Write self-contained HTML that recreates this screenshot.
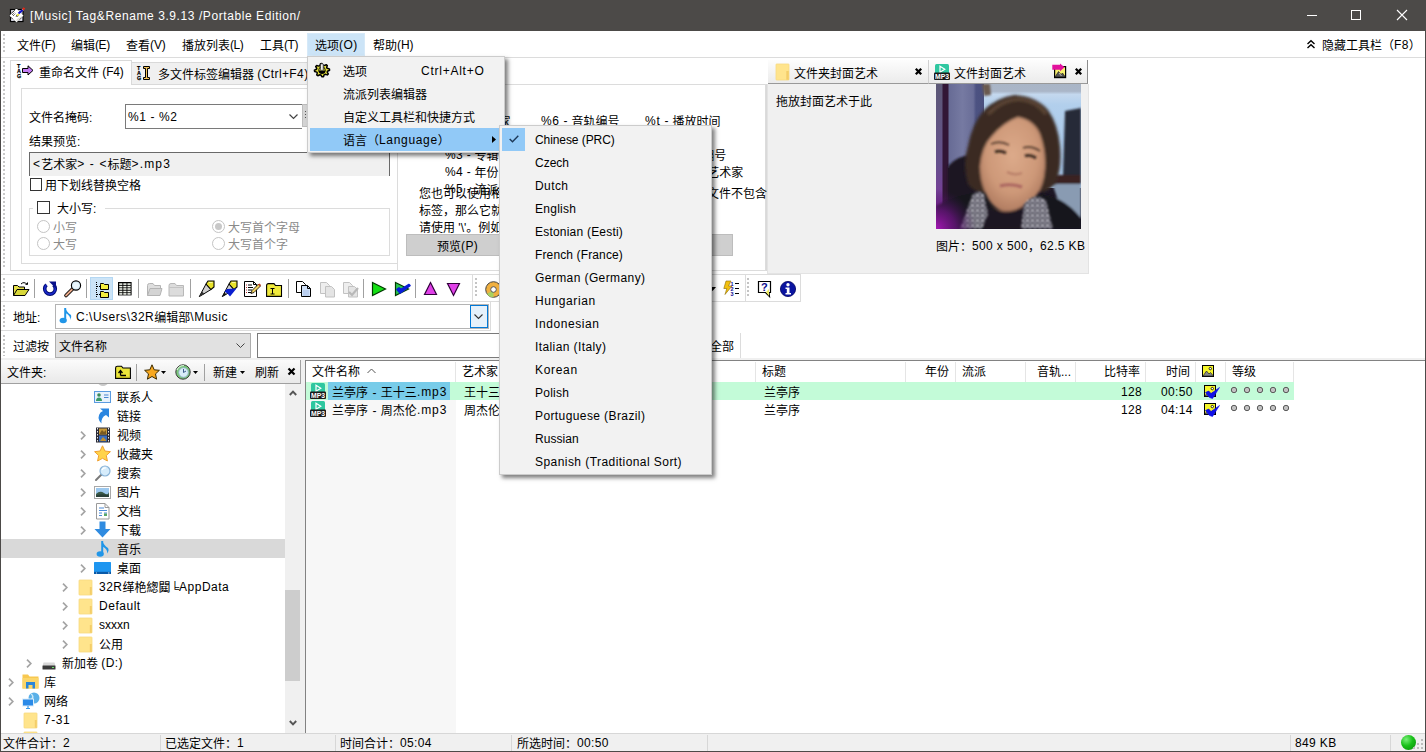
<!DOCTYPE html>
<html lang="zh-CN">
<head>
<meta charset="utf-8">
<title>[Music] Tag&amp;Rename 3.9.13 /Portable Edition/</title>
<style>
*{box-sizing:border-box;margin:0;padding:0}
html,body{width:1426px;height:752px;overflow:hidden;background:#fff}
body{position:relative;font:12px/16px "Liberation Sans","Noto Sans CJK SC",sans-serif;color:#000}
.a{position:absolute}
.t{position:absolute;white-space:nowrap;height:16px;line-height:16px;margin-top:2px}
.g{color:#8a8a8a}
.l{letter-spacing:.37px;position:relative;top:-1px}
.vs{position:absolute;width:1px;background:#a0a0a0}
svg{position:absolute;overflow:visible}
.mi{position:absolute;left:0;width:100%;height:23px}
.tr{position:absolute;left:0;width:284px;height:19px}
.ex{position:absolute;top:6px;width:6px;height:9px}
.hd{position:absolute;top:362px;height:20px;border-right:1px solid #e5e5e5}
</style>
</head>
<body>

<!-- ===== TITLE BAR ===== -->
<div class="a" id="titlebar" style="left:0;top:0;width:1426px;height:31px;background:#4c4a48"></div>
<div class="t" style="left:30px;top:7px;color:#fff"><span class="l" style="letter-spacing:0.58px">[Music] Tag&amp;Rename 3.9.13 /Portable Edition/</span></div>
<svg style="left:8px;top:6px" width="18" height="18" viewBox="0 0 18 18">
 <rect x="2.500" y="3.500" width="12.500" height="12" fill="#e8e8f4" stroke="#000" stroke-width="1.200"/>
 <path d="M8.500 2.200L15.800 9.500L8.500 16.800L1.200 9.500Z" fill="#fff" stroke="#000" stroke-width="1" stroke-dasharray="1 1"/>
 <path d="M4 7L7 4M4 9L7 6M5 10L8 7" stroke="#000" stroke-width=".9" stroke-dasharray="1 1"/>
 <path d="M8 16L15 9.500L9 13Z" fill="#d8d8d0"/>
 <path d="M7.500 10.500L9 8.500L10.500 9L10 10.500Z" fill="#000"/>
 <path d="M8.300 9.200L10.200 7.200L11.600 8.600L9.700 10.200Z" fill="#f0ec40"/>
 <path d="M9.800 6.800L14 3.200L15.300 4.800L11.200 8.200Z" fill="#1010c8"/>
 <path d="M14 3L15.500 1.200L17.300 2.600L15.600 4.600Z" fill="#e02818"/>
 <path d="M14.300 3.400L15.300 4.400" stroke="#fff" stroke-width=".8"/>
</svg>
<!-- window buttons -->
<div class="a" style="left:1307px;top:15px;width:10px;height:1px;background:#fff"></div>
<div class="a" style="left:1351px;top:10px;width:10px;height:10px;border:1px solid #fff"></div>
<svg style="left:1397px;top:10px" width="10" height="10" viewBox="0 0 10 10"><path d="M0 0L10 10M10 0L0 10" stroke="#fff" stroke-width="1.1" fill="none"/></svg>

<!-- ===== MENU BAR ===== -->
<div class="a" id="menubar" style="left:1px;top:31px;width:1425px;height:26px;background:#fff"></div>
<div class="a" style="left:307px;top:33px;width:58px;height:23px;background:#cce4f7;border:1px solid #d6e9f8"></div>
<div class="t" style="left:17px;top:36px">文件<span class="l" style="letter-spacing:-0.32px">(F)</span></div>
<div class="t" style="left:71px;top:36px">编辑<span class="l" style="letter-spacing:-0.41px">(E)</span></div>
<div class="t" style="left:126px;top:36px">查看<span class="l" style="letter-spacing:-0.11px">(V)</span></div>
<div class="t" style="left:182px;top:36px">播放列表<span class="l" style="letter-spacing:-0.44px">(L)</span></div>
<div class="t" style="left:260px;top:36px">工具<span class="l" style="letter-spacing:-0.47px">(T)</span></div>
<div class="t" style="left:315px;top:36px">选项<span class="l" style="letter-spacing:0.43px">(O)</span></div>
<div class="t" style="left:373px;top:36px">帮助<span class="l" style="letter-spacing:-0.04px">(H)</span></div>
<svg style="left:1307px;top:40px" width="8" height="9" viewBox="0 0 8 9"><path d="M0.5 4L4 0.8L7.5 4M0.5 8L4 4.8L7.5 8" stroke="#000" stroke-width="1.4" fill="none"/></svg>
<div class="t" style="left:1322px;top:36px">隐藏工具栏（<span class="l">F8</span>）</div>
<div class="a" style="left:1px;top:57px;width:1425px;height:1px;background:#dcdcdc"></div>
<div class="a" style="left:3px;top:34px;width:2px;height:19px;background:repeating-linear-gradient(to bottom,#c8c8c8 0 2px,transparent 2px 4px)"></div>

<!--SECTION:TABS-->
<!-- ===== TAB CONTROL (rename) ===== -->
<!-- left grip dots -->
<div class="a" style="left:3px;top:61px;width:2px;height:208px;background:repeating-linear-gradient(to bottom,#c8c8c8 0 2px,transparent 2px 4px)"></div>
<!-- inactive tab 2 -->
<div class="a" style="left:131px;top:62px;width:240px;height:22px;background:#f0f0f0;border:1px solid #d9d9d9;border-bottom:none"></div>
<!-- page -->
<div class="a" id="page" style="left:10px;top:84px;width:757px;height:187px;background:#fff;border:1px solid #d9d9d9"></div>
<!-- active tab 1 -->
<div class="a" style="left:10px;top:60px;width:122px;height:25px;background:#fff;border:1px solid #d9d9d9;border-bottom:none"></div>
<!-- tab icons -->
<svg style="left:17px;top:63px" width="18" height="16" viewBox="0 0 18 16">
 <text x="0" y="5" font-size="5.4" font-weight="bold" stroke="#000" stroke-width=".25" font-family="Liberation Sans,sans-serif">T</text>
 <text x="0" y="10" font-size="5.4" font-weight="bold" stroke="#000" stroke-width=".25" font-family="Liberation Sans,sans-serif">A</text>
 <text x="0" y="15" font-size="5.4" font-weight="bold" stroke="#000" stroke-width=".25" font-family="Liberation Sans,sans-serif">G</text>
 <path d="M5.500 5.500H11V2.800L16 7.400L11 12V9.500H5.500Z" fill="#c27cf2" stroke="#000" stroke-width="1"/>
</svg>
<div class="t" style="left:39px;top:63px">重命名文件 <span class="l" style="letter-spacing:-0.18px">(F4)</span></div>
<svg style="left:137px;top:65px" width="16" height="16" viewBox="0 0 16 16">
 <text x="0" y="5" font-size="5.4" font-weight="bold" stroke="#000" stroke-width=".25" font-family="Liberation Sans,sans-serif">T</text>
 <text x="0" y="10" font-size="5.4" font-weight="bold" stroke="#000" stroke-width=".25" font-family="Liberation Sans,sans-serif">A</text>
 <text x="0" y="15" font-size="5.4" font-weight="bold" stroke="#000" stroke-width=".25" font-family="Liberation Sans,sans-serif">G</text>
 <path d="M6.5 1.5H12.5V3.5H10.5V12.5H12.5V14.5H6.5V12.5H8.5V3.5H6.5Z" fill="#f2c45a" stroke="#000" stroke-width="1"/>
</svg>
<div class="t" style="left:158px;top:65px">多文件标签编辑器 <span class="l" style="letter-spacing:0.39px">(Ctrl+F4)</span></div>

<!-- left group box -->
<div class="a" style="left:21px;top:88px;width:377px;height:176px;border:1px solid #dcdcdc"></div>
<div class="t" style="left:29px;top:108px">文件名掩码:</div>
<div class="a" style="left:125px;top:104px;width:177px;height:25px;border:1px solid #7a7a7a;border-right:none;background:#fff"></div>
<div class="t" style="left:128px;top:108px"><span class="l" style="letter-spacing:0.61px">%1 - %2</span></div>
<svg style="left:289px;top:114px" width="9" height="6" viewBox="0 0 9 6"><path d="M0.500 0.500L4.500 4.500L8.500 0.500" stroke="#444" stroke-width="1.200" fill="none"/></svg>
<div class="a" style="left:302px;top:104px;width:10px;height:23px;background:#d4d4d4;border:1px solid #bdbdbd"></div>
<div class="a" style="left:305px;top:111px;width:1px;height:9px;background:repeating-linear-gradient(to bottom,#555 0 1px,transparent 1px 3px)"></div>
<div class="t" style="left:29px;top:132px">结果预览:</div>
<div class="a" style="left:29px;top:152px;width:361px;height:24px;background:#f0f0f0;border-top:1px solid #696969;border-left:1px solid #696969;border-right:1px solid #696969"></div>
<div class="t" style="left:33px;top:155px"><span class="l" style="letter-spacing:1.14px">&lt;</span>艺术家<span class="l" style="letter-spacing:1.14px">&gt; - &lt;</span>标题<span class="l" style="letter-spacing:1.14px">&gt;.mp3</span></div>
<div class="a" style="left:30px;top:178px;width:12px;height:13px;border:1px solid #333;background:#fff"></div>
<div class="t" style="left:45px;top:176px">用下划线替换空格</div>
<!-- case group -->
<div class="a" style="left:29px;top:208px;width:361px;height:48px;border:1px solid #dcdcdc"></div>
<div class="a" style="left:33px;top:200px;width:72px;height:16px;background:#fff"></div>
<div class="a" style="left:37px;top:201px;width:13px;height:13px;border:1px solid #333;background:#fff"></div>
<div class="t" style="left:57px;top:199px">大小写:</div>
<div class="a" style="left:37px;top:220px;width:13px;height:13px;border:1px solid #c4c4c4;border-radius:50%"></div>
<div class="t g" style="left:53px;top:218px">小写</div>
<div class="a" style="left:37px;top:237px;width:13px;height:13px;border:1px solid #c4c4c4;border-radius:50%"></div>
<div class="t g" style="left:53px;top:235px">大写</div>
<div class="a" style="left:212px;top:220px;width:13px;height:13px;border:1px solid #c4c4c4;border-radius:50%"></div>
<div class="a" style="left:215px;top:223px;width:7px;height:7px;background:#c8c8c8;border-radius:50%"></div>
<div class="t g" style="left:228px;top:218px">大写首个字母</div>
<div class="a" style="left:212px;top:237px;width:13px;height:13px;border:1px solid #c4c4c4;border-radius:50%"></div>
<div class="t g" style="left:228px;top:235px">大写首个字</div>

<!-- hints panel -->
<div class="a" style="left:397px;top:84px;width:369px;height:187px;border:1px solid #dcdcdc;background:#fff"></div>
<div class="t" style="left:445px;top:112px"><span class="l">%1 -</span> 艺术家</div>
<div class="t" style="left:541px;top:112px"><span class="l" style="letter-spacing:0.64px">%6 -</span> 音轨编号</div>
<div class="t" style="left:645px;top:112px"><span class="l" style="letter-spacing:0.73px">%t -</span> 播放时间</div>
<div class="t" style="left:445px;top:129px"><span class="l">%2 -</span> 标题</div>
<div class="t" style="left:541px;top:129px"><span class="l">%7 -</span> 注释</div>
<div class="t" style="left:645px;top:129px"><span class="l">%d -</span> 光盘号</div>
<div class="t" style="left:445px;top:146px"><span class="l">%3 -</span> 专辑</div>
<div class="t" style="left:541px;top:146px"><span class="l">%8 -</span> 作曲</div>
<div class="t" style="left:637.5px;top:146px"><span class="l">%k -</span> 光盘总编号</div>
<div class="t" style="left:445px;top:163px"><span class="l">%4 -</span> 年份</div>
<div class="t" style="left:541px;top:163px"><span class="l">%9 -</span> 指挥</div>
<div class="t" style="left:645px;top:163px"><span class="l" style="letter-spacing:0.72px">%aa -</span> 专辑艺术家</div>
<div class="t" style="left:445px;top:180px"><span class="l">%5 -</span> 流派</div>
<div class="t" style="left:419px;top:184px">您也可以使用格式化字符串来创建子目录，如果某一个文件不包含</div>
<div class="t" style="left:419px;top:201px">标签，那么它就不会被重命名。要分隔目录，</div>
<div class="t" style="left:419px;top:218px">请使用 '\'。例如：<span class="l">%1\%3\%6 - %2</span></div>
<div class="a" style="left:406px;top:234px;width:160px;height:22px;background:#cfcfcf;border:1px solid #bdbdbd"></div>
<div class="a" style="left:573px;top:234px;width:160px;height:22px;background:#cfcfcf;border:1px solid #bdbdbd"></div>
<div class="t" style="left:437px;top:237px">预览<span class="l">(P)</span></div>
<!--/SECTION:TABS-->

<!--SECTION:COVER-->
<!-- ===== COVER ART PANELS ===== -->
<div class="a" style="left:767px;top:84px;width:322px;height:190px;background:#f0f0f0;border:1px solid #e3e3e3;border-top:none"></div>
<div class="a" style="left:768px;top:60px;width:161px;height:24px;background:linear-gradient(#fdfdfd,#ebebeb);border-right:1px solid #d0d0d0;border-bottom:1px solid #999"></div>
<div class="a" style="left:929px;top:60px;width:159px;height:24px;background:linear-gradient(#fdfdfd,#ebebeb);border-right:1px solid #8c8c8c;border-bottom:1px solid #999"></div>
<!-- folder icon -->
<svg style="left:776px;top:64px" width="13" height="16" viewBox="0 0 13 16"><rect x="0" y="0" width="13" height="16" rx=".6" fill="#ffe48c"/><rect x="10.300" y="7" width="2.700" height="9" fill="#f4cd68"/><rect x="0" y="0" width="13" height="16" rx=".6" fill="none" stroke="#f8d980" stroke-width=".8"/></svg>
<div class="t" style="left:794px;top:64px">文件夹封面艺术</div>
<svg style="left:915px;top:68px" width="7" height="7" viewBox="0 0 7 7"><path d="M0.800 0.800L6.200 6.200M6.200 0.800L0.800 6.200" stroke="#000" stroke-width="2.300" fill="none"/></svg>
<!-- mp3 icon -->
<svg style="left:934px;top:64px" width="16" height="16" viewBox="0 0 16 16"><rect x="1" y="0" width="14" height="11" rx="1.5" fill="#2fc7a0"/><path d="M6 2.2L10.8 5.2L6 8.2Z" fill="none" stroke="#fff" stroke-width="1.2"/><rect x="0" y="8.500" width="16" height="7.500" rx="1" fill="#1a1a1a"/><text x="8" y="15" font-size="7" font-weight="bold" fill="#fff" text-anchor="middle" textLength="14" lengthAdjust="spacingAndGlyphs" font-family="Liberation Sans,sans-serif">MP3</text></svg>
<div class="t" style="left:954px;top:64px">文件封面艺术</div>
<!-- small picture icon -->
<svg style="left:1052px;top:63px" width="15" height="16" viewBox="0 0 15 16"><rect x="2.600" y="3.600" width="11" height="11" fill="#f8f070" stroke="#000" stroke-width="1.200"/><path d="M3 14L6.500 8.500L9 11.500L10.500 10L13 13.500V14Z" fill="#555" stroke="#111" stroke-width=".6"/><path d="M7 10L9.500 13" stroke="#d8d8d8" stroke-width=".8"/><path d="M0.300 1.800H8V0.400L12.600 4.300L8 8.200V6.800H0.300Z" fill="#e2109c"/></svg>
<svg style="left:1075px;top:68px" width="7" height="7" viewBox="0 0 7 7"><path d="M0.800 0.800L6.200 6.200M6.200 0.800L0.800 6.200" stroke="#000" stroke-width="2.300" fill="none"/></svg>
<div class="t" style="left:776px;top:92px">拖放封面艺术于此</div>
<!-- album art thumbnail : abstract colour regions -->
<svg style="left:936px;top:84px" width="145" height="145" viewBox="0 0 145 145">
 <defs>
  <clipPath id="cv"><rect x="0" y="0" width="145" height="145"/></clipPath>
  <filter id="b1" x="-20%" y="-20%" width="140%" height="140%"><feGaussianBlur stdDeviation="0.9"/></filter>
  <filter id="b2" x="-20%" y="-20%" width="140%" height="140%"><feGaussianBlur stdDeviation="1.5"/></filter>
  <linearGradient id="wall" x1="0" y1="0" x2="0" y2="1"><stop offset="0" stop-color="#a9b5c6"/><stop offset=".07" stop-color="#aab6c8"/><stop offset=".1" stop-color="#c4d8ee"/><stop offset=".2" stop-color="#b2cfec"/><stop offset="1" stop-color="#a6c6e8"/></linearGradient>
  <linearGradient id="cur" x1="0" y1="0" x2="1" y2="0"><stop offset="0" stop-color="#666a94"/><stop offset=".4" stop-color="#767aa2"/><stop offset=".7" stop-color="#6a6e98"/><stop offset=".78" stop-color="#4c5282"/><stop offset="1" stop-color="#4a507e"/></linearGradient>
  <linearGradient id="strip" x1="0" y1="0" x2="0" y2="1"><stop offset="0" stop-color="#5c5876"/><stop offset=".55" stop-color="#65508c"/><stop offset=".8" stop-color="#7a3a9a"/><stop offset="1" stop-color="#9a1aa8"/></linearGradient>
  <radialGradient id="glow" cx="0" cy="1" r="1"><stop offset="0" stop-color="#a516b4"/><stop offset=".5" stop-color="#6a1480" stop-opacity=".75"/><stop offset="1" stop-color="#3a1450" stop-opacity="0"/></radialGradient>
  <radialGradient id="skin" cx=".5" cy=".4" r=".65"><stop offset="0" stop-color="#dcaa8a"/><stop offset=".6" stop-color="#cd9878"/><stop offset="1" stop-color="#a8745a"/></radialGradient>
  <pattern id="pais" width="5" height="5" patternUnits="userSpaceOnUse"><rect width="5" height="5" fill="#4a4854"/><circle cx="1.500" cy="1.500" r="1.300" fill="#d8d6e0"/><circle cx="4" cy="3.800" r="1" fill="#b4b2c0"/></pattern>
 </defs>
 <g clip-path="url(#cv)">
  <rect width="145" height="145" fill="#1c1624"/>
  <rect x="46" y="0" width="99" height="104" fill="url(#wall)"/>
  <rect x="12" y="0" width="36" height="84" fill="url(#cur)"/>
  <rect x="0" y="0" width="7" height="145" fill="url(#strip)"/>
  <rect x="6.500" y="0" width="6" height="145" fill="#321636"/>
  <g filter="url(#b1)">
   <path d="M46 0H54L55 11L48 12Z" fill="#6a5a50"/>
   <path d="M129 27L145 24V93L127 91Z" fill="#282c38"/>
   <path d="M116 99H145V138L124 122Z" fill="#899bb2"/>
   <path d="M110 91H145V100H112Z" fill="#3a2420"/>
   <path d="M12 82Q28 66 46 74L52 145H12Z" fill="#1b1622"/>
   <path d="M0 145V122Q40 100 76 114Q118 100 145 134V145Z" fill="#19151d"/>
  </g>
  <g filter="url(#b2)">
   <path d="M32 100Q26 80 32 62Q36 40 48 26Q60 14 78 11Q100 12 112 26Q122 40 124 62Q126 84 120 98Q114 108 104 108L60 108Q40 112 32 100Z" fill="#3a2a23"/>
   <path d="M52 30Q66 16 82 15Q100 16 110 30" stroke="#5c4434" stroke-width="3.500" fill="none"/>
   <path d="M44 82Q46 62 56 52Q68 38 82 33Q98 36 104 50Q110 66 109 84Q108 102 100 112Q88 128 72 129Q56 126 49 108Q44 96 44 82Z" fill="url(#skin)"/>
   <path d="M46 145L50 122Q72 134 90 120L88 145Z" fill="#1a1320"/>
  </g>
  <g filter="url(#b1)">
   <path d="M24 145L36 112Q42 104 48 110L52 130L46 145Z" fill="url(#pais)"/>
   <path d="M85 145L88 120Q98 108 110 116L117 145Z" fill="url(#pais)"/>
  </g>
  <g filter="url(#b1)" opacity=".9">
   <path d="M59 68Q64 66 70 69" stroke="#2a1c16" stroke-width="2.800" fill="none"/>
   <path d="M89 72Q94 70 100 74" stroke="#2a1c16" stroke-width="2.800" fill="none"/>
   <path d="M55 60Q64 56 73 61" stroke="#5a3f30" stroke-width="1.800" fill="none"/>
   <path d="M87 64Q95 61 104 67" stroke="#5a3f30" stroke-width="1.800" fill="none"/>
   <path d="M64 102Q75 99 86 103" stroke="#a8625e" stroke-width="3" fill="none"/>
   <path d="M71 88Q78 92 86 89" stroke="#b57c66" stroke-width="2.200" fill="none"/>
  </g>
  <rect x="0" y="105" width="40" height="40" fill="url(#glow)"/>
 </g>
</svg>
<div class="t" style="left:936px;top:237px">图片：<span class="l">500 x 500</span>，<span class="l">62.5 KB</span></div>
<!--/SECTION:COVER-->

<!--SECTION:TOOLBAR-->
<!-- ===== TOOLBARS ===== -->
<div class="a" style="left:1px;top:274px;width:800px;height:1px;background:#dcdcdc"></div>
<div class="a" style="left:1px;top:301px;width:800px;height:1px;background:#dcdcdc"></div>
<div class="a" style="left:472px;top:275px;width:1px;height:26px;background:#dcdcdc"></div>
<div class="a" style="left:745px;top:275px;width:1px;height:26px;background:#dcdcdc"></div>
<div class="a" style="left:800px;top:275px;width:1px;height:26px;background:#dcdcdc"></div>
<div class="a" style="left:3px;top:278px;width:2px;height:19px;background:repeating-linear-gradient(to bottom,#c4c4c4 0 2px,transparent 2px 4px)"></div>
<div class="a" style="left:475px;top:278px;width:2px;height:19px;background:repeating-linear-gradient(to bottom,#c4c4c4 0 2px,transparent 2px 4px)"></div>
<div class="a" style="left:747px;top:278px;width:2px;height:19px;background:repeating-linear-gradient(to bottom,#c4c4c4 0 2px,transparent 2px 4px)"></div>
<div class="vs" style="left:34px;top:279px;height:19px"></div>
<div class="vs" style="left:86px;top:279px;height:19px"></div>
<div class="vs" style="left:138px;top:279px;height:19px"></div>
<div class="vs" style="left:190px;top:279px;height:19px"></div>
<div class="vs" style="left:288px;top:279px;height:19px"></div>
<div class="vs" style="left:363px;top:279px;height:19px"></div>
<div class="vs" style="left:415px;top:279px;height:19px"></div>
<!-- pressed tree-view button -->
<div class="a" style="left:90px;top:277px;width:23px;height:23px;background:#cce4f7;border:1px solid #b4d7f3"></div>
<!-- 1 open folder -->
<svg style="left:12px;top:281px" width="18" height="16" viewBox="0 0 18 16"><path d="M1.5 14.5V4.5H5.5L7 6H12.5V8.5" fill="#e6e04a" stroke="#000" stroke-width="1"/><path d="M1.5 14.5L5 8.5H17L13 14.5Z" fill="#d8d83a" stroke="#000" stroke-width="1"/><path d="M9 3Q12 0 15 3.5" fill="none" stroke="#000" stroke-width="1"/><path d="M13 3.8H16V1Z" fill="#000"/></svg>
<!-- 2 refresh -->
<svg style="left:42px;top:281px" width="16" height="16" viewBox="0 0 16 16"><path d="M11.5 3.8A5.3 5.3 0 1 1 4.5 3.8" fill="none" stroke="#000a70" stroke-width="3.6"/><path d="M11.5 3.8A5.3 5.3 0 1 1 4.5 3.8" fill="none" stroke="#1a2acc" stroke-width="1.6"/><path d="M7 0.5H14V7.5Z" fill="#0a128a"/></svg>
<!-- 3 magnifier -->
<svg style="left:64px;top:280px" width="18" height="17" viewBox="0 0 18 17"><path d="M2 15.5L9 8.5" stroke="#000" stroke-width="3.6" stroke-linecap="round"/><path d="M2 15.5L8.5 9" stroke="#e8a888" stroke-width="1.8" stroke-linecap="round"/><circle cx="12" cy="5.5" r="4.6" fill="#d6ecf6" stroke="#000" stroke-width="1.1"/><circle cx="12" cy="5.5" r="3" fill="#eaf6fb"/></svg>
<!-- 4 tree view -->
<svg style="left:95px;top:282px" width="15" height="17" viewBox="0 0 15 17"><path d="M1.5 0V16" stroke="#000" stroke-width="1" stroke-dasharray="1 1"/><path d="M2 4.5H6M2 12.5H6" stroke="#000" stroke-width="1" stroke-dasharray="1 1"/><path d="M5.500 2.5V7.500H13.500V2.500H9.500L8.500 1.500H5.500Z" fill="#f2ee40" stroke="#000" stroke-width="1"/><path d="M5.500 10.500V15.500H13.500V10.500H9.500L8.500 9.500H5.500Z" fill="#f2ee40" stroke="#000" stroke-width="1"/></svg>
<!-- 5 table -->
<svg style="left:118px;top:282px" width="14" height="14" viewBox="0 0 14 14"><rect x="0" y="0" width="13.600" height="13.400" fill="#000"/><g fill="#f0f4ec"><rect x="1.2" y="1.3" width="3.2" height="1.6"/><rect x="5.3" y="1.3" width="3.2" height="1.6"/><rect x="9.4" y="1.3" width="3.2" height="1.6"/><rect x="1.2" y="3.8" width="3.2" height="1.6"/><rect x="5.3" y="3.8" width="3.2" height="1.6"/><rect x="9.4" y="3.8" width="3.2" height="1.6"/><rect x="1.2" y="6.2" width="3.2" height="1.6"/><rect x="5.3" y="6.2" width="3.2" height="1.6"/><rect x="9.4" y="6.2" width="3.2" height="1.6"/><rect x="1.2" y="8.7" width="3.2" height="1.6"/><rect x="5.3" y="8.7" width="3.2" height="1.6"/><rect x="9.4" y="8.7" width="3.2" height="1.6"/><rect x="1.2" y="11.1" width="3.2" height="1.6"/><rect x="5.3" y="11.1" width="3.2" height="1.6"/><rect x="9.4" y="11.1" width="3.2" height="1.6"/></g></svg>
<!-- 6,7 grey folders -->
<svg style="left:146px;top:283px" width="17" height="14" viewBox="0 0 17 14"><path d="M1.500 12.500V2.500Q1.500 0.500 3.500 0.500H7L8.500 2.500H14.500V5.500" fill="#dedede" stroke="#b4b4b4"/><path d="M1.500 12.500L4 5.500H16L14 12.500Z" fill="#d4d4d4" stroke="#b4b4b4"/></svg>
<svg style="left:168px;top:283px" width="17" height="14" viewBox="0 0 17 14"><path d="M1 13V2.500Q1 0.500 3 0.500H7L8.500 2.500H15.500V13Z" fill="#dcdcdc" stroke="#b8b8b8"/><path d="M1 4.500H15.500" stroke="#c4c4c4"/></svg>
<!-- 8 marker -->
<svg style="left:198px;top:280px" width="17" height="18" viewBox="0 0 17 18"><path d="M1.300 16.600L8 4L13 9.500Z" fill="#d0d0d0" stroke="#000" stroke-width="1"/><path d="M8 4L10 1H16V7L13 9.500Z" fill="#e8e22a" stroke="#000" stroke-width="1.100"/><path d="M1.300 16.600L4 11.500L6.500 14Z" fill="#333"/><path d="M11 2.500L14.500 2.500" stroke="#f8f6a0" stroke-width="1"/></svg>
<!-- 9 marker blue -->
<svg style="left:221px;top:280px" width="17" height="18" viewBox="0 0 17 18"><path d="M1.300 16.600L8 4L13 9.500Z" fill="#d0d0d0" stroke="#000" stroke-width="1"/><path d="M8 4L10 1H16V7L13 9.500Z" fill="#e8e22a" stroke="#000" stroke-width="1.100"/><path d="M3.500 11.500L6 9L15.500 8.500L9 16.500L6.500 13.500Z" fill="#0a1ed0"/><path d="M1.300 16.600L3.500 12.500L5.500 14.500Z" fill="#111"/><path d="M11 2.500L14.500 2.500" stroke="#f8f6a0" stroke-width="1"/></svg>
<!-- 10 doc with pencil -->
<svg style="left:244px;top:281px" width="17" height="16" viewBox="0 0 17 16"><path d="M0.500 0.500H9.500L12.500 3.500V15.500H0.500Z" fill="#fff" stroke="#000" stroke-width="1"/><path d="M9.500 0.500V3.500H12.500" fill="none" stroke="#000" stroke-width="1"/><path d="M4 4H8M4 6.500H9M4 9H8M4 11.500H7" stroke="#000" stroke-width="1"/><path d="M2 4H3M2 6.500H3M2 9H3M2 11.500H3" stroke="#c03030" stroke-width="1"/><path d="M7 12.500L8 9.500L14.500 3L16.500 5L10 11.500Z" fill="#f0d060" stroke="#000" stroke-width=".8"/><path d="M14 3.500L15.500 2.500L17 4L16 5.500Z" fill="#c04020"/></svg>
<!-- 11 yellow folder I -->
<svg style="left:266px;top:283px" width="17" height="14" viewBox="0 0 17 14"><path d="M0.600 13.400V2.500Q0.600 0.600 2.500 0.600H8L9.500 2.500H15.500V13.400Z" fill="#f0ea3c" stroke="#000" stroke-width="1.100"/><path d="M4.500 5.500H8.500M4.500 11H8.500M6.500 5.500V11" stroke="#000" stroke-width="1"/><path d="M2 12.400H14.500" stroke="#b8b020" stroke-width="1"/></svg>
<!-- 12 copy -->
<svg style="left:295px;top:280px" width="17" height="17" viewBox="0 0 17 17"><path d="M1.500 1.500H7.500L10.500 4.500V12.500H1.500Z" fill="#fff" stroke="#000" stroke-width="1"/><path d="M6.500 5.500H12.500L15.500 8.500V16.500H6.500Z" fill="#cfe0f8" stroke="#000" stroke-width="1"/><path d="M12.500 5.500V8.500H15.500" fill="none" stroke="#000" stroke-width="1"/><path d="M8 11H14M8 13H14M8 15H14" stroke="#9ab4e0" stroke-width=".8"/></svg>
<!-- 13,14 grey copy -->
<svg style="left:319px;top:281px" width="17" height="17" viewBox="0 0 17 17"><path d="M1.500 1.500H7.500L10.500 4.500V12.500H1.500Z" fill="#eee" stroke="#c2c2c2" stroke-width="1"/><path d="M6.500 5.500H12.500L15.500 8.500V16H6.500Z" fill="#e4e4e4" stroke="#c2c2c2" stroke-width="1"/></svg>
<svg style="left:342px;top:281px" width="17" height="17" viewBox="0 0 17 17"><path d="M1.500 1.500H7.500L10.500 4.500V12.500H1.500Z" fill="#eee" stroke="#c2c2c2" stroke-width="1"/><path d="M6.500 5.500H12.500L15.500 8.500V16H6.500Z" fill="#e4e4e4" stroke="#c2c2c2" stroke-width="1"/><path d="M7 11L10 14L16 7" fill="none" stroke="#b8b8b8" stroke-width="2.200"/></svg>
<!-- 15 play -->
<svg style="left:371px;top:281px" width="16" height="16" viewBox="0 0 16 16"><path d="M1.500 1.500L14.500 8L1.500 14.500Z" fill="#14e014" stroke="#003a00" stroke-width="1.200"/></svg>
<!-- 16 play+check -->
<svg style="left:394px;top:281px" width="18" height="16" viewBox="0 0 18 16"><path d="M1.500 1.500L14.500 8L1.500 14.500Z" fill="#2ac850" stroke="#003a00" stroke-width="1.200"/><path d="M3 8.500L6 12L16 4.500L15 3.500L7 8.500L5 7Z" fill="#0a1ed8" stroke="#0a1ed8" stroke-width="1.600" stroke-linejoin="round"/></svg>
<!-- 17 up triangle -->
<svg style="left:423px;top:281px" width="15" height="15" viewBox="0 0 15 15"><path d="M7.500 1.500L13.500 13.500H1.500Z" fill="#e040e8" stroke="#30003a" stroke-width="1.200"/></svg>
<!-- 18 down triangle -->
<svg style="left:446px;top:282px" width="15" height="15" viewBox="0 0 15 15"><path d="M1.500 1.500H13.500L7.500 13.500Z" fill="#e040e8" stroke="#30003a" stroke-width="1.200"/></svg>
<!-- CD -->
<svg style="left:485px;top:281px" width="17" height="17" viewBox="0 0 17 17"><circle cx="8.500" cy="8.500" r="7.800" fill="#f0b040" stroke="#444" stroke-width="1"/><path d="M8.500 8.500L2 13A7.800 7.800 0 0 0 8.500 16.300Z" fill="#a8d060"/><circle cx="8.500" cy="8.500" r="2.800" fill="#fff" stroke="#555" stroke-width="1"/></svg>
<!-- dropdown arrow remnant -->
<svg style="left:709px;top:287px" width="7" height="4" viewBox="0 0 7 4"><path d="M0 0H7L3.500 4Z" fill="#000"/></svg>
<!-- lightning list -->
<svg style="left:723px;top:280px" width="18" height="17" viewBox="0 0 18 17"><path d="M3 1H8L5.500 6H9L2 14.500L3.800 8.500H0.800Z" fill="#f2c010" stroke="#8a6a00" stroke-width=".6"/><text x="7.500" y="5.500" font-size="5.500" font-weight="bold" fill="#0a0a90" font-family="Liberation Sans,sans-serif">1</text><text x="7.500" y="10.500" font-size="5.500" font-weight="bold" fill="#0a0a90" font-family="Liberation Sans,sans-serif">2</text><text x="7.500" y="15.500" font-size="5.500" font-weight="bold" fill="#0a0a90" font-family="Liberation Sans,sans-serif">3</text><path d="M12 3.500H16M12 8.500H16M12 13.500H16" stroke="#000" stroke-width="1"/></svg>
<!-- help -->
<svg style="left:757px;top:280px" width="15" height="18" viewBox="0 0 15 18"><path d="M1.500 1.500H13.500V12.500H12L12.500 16.500L8.500 12.500H1.500Z" fill="#fff" stroke="#000" stroke-width="1.200"/><path d="M9 12L12 16L12 9Z" fill="#f0ec60"/><text x="7.300" y="11" font-size="11" font-weight="bold" fill="#0a0a90" text-anchor="middle" font-family="Liberation Sans,sans-serif">?</text></svg>
<!-- info -->
<svg style="left:780px;top:281px" width="16" height="16" viewBox="0 0 16 16"><circle cx="8" cy="8" r="7.600" fill="#0a14a0" stroke="#000060" stroke-width=".8"/><circle cx="8" cy="3.800" r="1.700" fill="#fff"/><path d="M5.500 6.500H9.500V12H11V13.500H5.500V12H6.800V8H5.500Z" fill="#fff"/></svg>

<!-- ===== ADDRESS ROW ===== -->
<div class="a" style="left:3px;top:305px;width:2px;height:23px;background:repeating-linear-gradient(to bottom,#c4c4c4 0 2px,transparent 2px 4px)"></div>
<div class="t" style="left:13px;top:308px">地址:</div>
<div class="a" style="left:55px;top:304px;width:434px;height:25px;border:1px solid #b4b4b4;background:#fff"></div>
<svg style="left:59px;top:307px" width="14" height="18" viewBox="0 0 14 18"><path d="M6.200 1V13" stroke="#2196e8" stroke-width="2"/><path d="M6.500 1Q7.500 5 12 8Q13 10 11 13Q12 9 6.500 6Z" fill="#2196e8"/><ellipse cx="4.200" cy="13.500" rx="3.600" ry="2.800" fill="#2196e8"/></svg>
<div class="t" style="left:76px;top:308px"><span class="l" style="letter-spacing:0.52px">C:\Users\32R</span>编辑部<span class="l" style="letter-spacing:0.52px">\Music</span></div>
<div class="a" style="left:470px;top:305px;width:18px;height:23px;background:#e5f1fb;border:1px solid #0078d7"></div>
<svg style="left:474px;top:314px" width="9" height="6" viewBox="0 0 9 6"><path d="M0.500 0.500L4.500 4.500L8.500 0.500" stroke="#333" stroke-width="1.100" fill="none"/></svg>
<div class="a" style="left:1px;top:330px;width:490px;height:1px;background:#dcdcdc"></div>
<div class="a" style="left:490px;top:302px;width:1px;height:29px;background:#dcdcdc"></div>
<!-- ===== FILTER ROW ===== -->
<div class="a" style="left:3px;top:335px;width:2px;height:21px;background:repeating-linear-gradient(to bottom,#c4c4c4 0 2px,transparent 2px 4px)"></div>
<div class="t" style="left:13px;top:337px">过滤按</div>
<div class="a" style="left:55px;top:333px;width:196px;height:25px;background:#e1e1e1;border:1px solid #adadad"></div>
<div class="t" style="left:59px;top:337px">文件名称</div>
<svg style="left:236px;top:343px" width="9" height="6" viewBox="0 0 9 6"><path d="M0.500 0.500L4.500 4.500L8.500 0.500" stroke="#444" stroke-width="1" fill="none"/></svg>
<div class="a" style="left:257px;top:333px;width:446px;height:25px;border:1px solid #7a7a7a;background:#fff"></div>
<div class="a" style="left:706px;top:333px;width:35px;height:25px;background:#fff;border-right:1px solid #dcdcdc"></div>
<div class="t" style="left:710px;top:337px">全部</div>
<!--/SECTION:TOOLBAR-->

<!--SECTION:TREE-->
<!-- ===== FOLDER PANEL ===== -->
<div class="a" style="left:1px;top:358px;width:1425px;height:2px;background:#f0f0f0"></div>
<div class="a" id="fhead" style="left:1px;top:360px;width:300px;height:24px;background:linear-gradient(#fbfbfb,#e9e9e9);border-bottom:1px solid #a0a0a0;border-right:1px solid #a0a0a0"></div>
<div class="t" style="left:7px;top:363px">文件夹:</div>
<svg style="left:115px;top:365px" width="16" height="14" viewBox="0 0 16 14"><path d="M0.600 13.400V3Q0.600 1.200 2.400 1.200H6.500L8 3H15.400V13.400Z" fill="#ece63a" stroke="#000" stroke-width="1.100"/><path d="M5.500 10.500H11M5.500 10.500V6M3.500 8L5.500 5.600L7.500 8" fill="none" stroke="#000" stroke-width="1.300"/><path d="M2 12.300H14.500" stroke="#b8b020" stroke-width="1"/></svg>
<div class="vs" style="left:136px;top:364px;height:17px"></div>
<svg style="left:144px;top:364px" width="16" height="16" viewBox="0 0 16 16"><path d="M8 0.800L10.200 5.800L15.400 6.300L11.500 9.900L12.600 15.200L8 12.500L3.400 15.200L4.500 9.900L0.600 6.300L5.800 5.800Z" fill="#f8a820" stroke="#3a2a00" stroke-width="1"/></svg>
<svg style="left:161px;top:371px" width="5" height="3" viewBox="0 0 5 3"><path d="M0 0H5L2.500 3Z" fill="#000"/></svg>
<svg style="left:175px;top:364px" width="16" height="16" viewBox="0 0 16 16"><circle cx="8" cy="8" r="7.200" fill="#7ac87a" stroke="#3a3a3a" stroke-width="1"/><circle cx="8.500" cy="8.500" r="4.800" fill="#d8ecf8" stroke="#8aa8c0" stroke-width=".8"/><path d="M8.500 8.500V5M8.500 8.500L11 7" stroke="#3a5a8a" stroke-width="1" fill="none"/><path d="M2 6Q4 1.500 9 1.500" stroke="#d8f0d8" stroke-width="1.200" fill="none"/></svg>
<svg style="left:193px;top:371px" width="5" height="3" viewBox="0 0 5 3"><path d="M0 0H5L2.500 3Z" fill="#000"/></svg>
<div class="vs" style="left:204px;top:364px;height:17px"></div>
<div class="t" style="left:213px;top:363px">新建</div>
<svg style="left:240px;top:371px" width="5" height="3" viewBox="0 0 5 3"><path d="M0 0H5L2.500 3Z" fill="#000"/></svg>
<div class="t" style="left:255px;top:363px">刷新</div>
<svg style="left:287px;top:367px" width="9" height="9" viewBox="0 0 9 9"><path d="M1.500 1.500L7.500 7.500M7.500 1.500L1.500 7.500" stroke="#000" stroke-width="2.200" fill="none"/></svg>
<!-- tree -->
<div class="a" id="tree" style="left:1px;top:384px;width:284px;height:349px;background:#fff;overflow:hidden">
<div class="a" style="left:97px;top:-6px;width:10px;height:8px;border-radius:50%;background:#c8c8c8"></div>
<div class="tr" style="top:3px"><svg style="left:93px;top:4px" width="17" height="12" viewBox="0 0 17 12"><rect x="0.500" y="0.500" width="16" height="11" fill="#e8f2fc" stroke="#5a9be0" stroke-width="1"/><circle cx="5" cy="4" r="1.800" fill="#3a8a5a"/><path d="M2 10Q2 6.500 5 6.500Q8 6.500 8 10Z" fill="#3a9a68"/><path d="M10 4H14.500M10 6.500H14.500" stroke="#4a86d0" stroke-width="1"/></svg><div class="t" style="left:116px;top:1px">联系人</div></div>
<div class="tr" style="top:22px"><svg style="left:95px;top:2px" width="14" height="16" viewBox="0 0 14 16"><path d="M4 0.500H13V9.500L10 7Q5 9 5.500 15.500Q0 10 4.500 4.500Q5.500 3.500 7 3Z" fill="#2b86e0"/></svg><div class="t" style="left:116px;top:1px">链接</div></div>
<div class="tr" style="top:41px"><svg class="ex" style="left:79px" viewBox="0 0 6 9"><path d="M1 0.700L4.800 4.500L1 8.300" fill="none" stroke="#a4a4a4" stroke-width="1.700"/></svg><svg style="left:95px;top:2px" width="14" height="16" viewBox="0 0 14 16"><rect x="0" y="0.500" width="14" height="15" fill="#2a2a36"/><rect x="3" y="1.500" width="8" height="6" fill="#c89a3a"/><rect x="3" y="8.500" width="8" height="6" fill="#3a6ec0"/><path d="M1.500 1V15M12.500 1V15" stroke="#e8e8e8" stroke-width="1" stroke-dasharray="1.500 1.500"/><path d="M4 6L6 3L8 5L10 3V7H4Z" fill="#7a5a20"/><path d="M4 14L7 10L10 13V14Z" fill="#c09030"/></svg><div class="t" style="left:116px;top:1px">视频</div></div>
<div class="tr" style="top:60px"><svg class="ex" style="left:79px" viewBox="0 0 6 9"><path d="M1 0.700L4.800 4.500L1 8.300" fill="none" stroke="#a4a4a4" stroke-width="1.700"/></svg><svg style="left:93px;top:1px" width="17" height="17" viewBox="0 0 17 17"><path d="M8.500 0.800L10.900 6L16.400 6.700L12.300 10.500L13.400 16L8.500 13.300L3.600 16L4.700 10.500L0.600 6.700L6.100 6Z" fill="#ffd34a" stroke="#f0a030" stroke-width="1"/></svg><div class="t" style="left:116px;top:1px">收藏夹</div></div>
<div class="tr" style="top:79px"><svg class="ex" style="left:79px" viewBox="0 0 6 9"><path d="M1 0.700L4.800 4.500L1 8.300" fill="none" stroke="#a4a4a4" stroke-width="1.700"/></svg><svg style="left:94px;top:2px" width="16" height="16" viewBox="0 0 16 16"><path d="M1 15L6.500 9.500" stroke="#7a7a7a" stroke-width="2" stroke-linecap="round"/><circle cx="10" cy="6" r="5" fill="#d6ecfb" stroke="#8ab4d8" stroke-width="1.200"/><path d="M7 5Q8 2.500 11 3" stroke="#fff" stroke-width="1.200" fill="none"/></svg><div class="t" style="left:116px;top:1px">搜索</div></div>
<div class="tr" style="top:98px"><svg class="ex" style="left:79px" viewBox="0 0 6 9"><path d="M1 0.700L4.800 4.500L1 8.300" fill="none" stroke="#a4a4a4" stroke-width="1.700"/></svg><svg style="left:93px;top:4px" width="17" height="13" viewBox="0 0 17 13"><rect x="0.500" y="0.500" width="16" height="12" fill="#fff" stroke="#a8a8a8" stroke-width="1"/><rect x="2" y="2" width="13" height="9" fill="#9cc8ee"/><path d="M2 8Q6 4 10 7T15 6V11H2Z" fill="#3a5a4a"/><path d="M2 9.500Q8 7 15 9.500V11H2Z" fill="#2a4038"/></svg><div class="t" style="left:116px;top:1px">图片</div></div>
<div class="tr" style="top:117px"><svg class="ex" style="left:79px" viewBox="0 0 6 9"><path d="M1 0.700L4.800 4.500L1 8.300" fill="none" stroke="#a4a4a4" stroke-width="1.700"/></svg><svg style="left:95px;top:2px" width="14" height="17" viewBox="0 0 14 17"><path d="M0.500 0.500H9L13 4.500V16H0.500Z" fill="#fff" stroke="#9a9a9a" stroke-width="1"/><path d="M9 0.500V4.500H13" fill="none" stroke="#9a9a9a" stroke-width="1"/><path d="M3 5H8M3 7.500H11M3 10H6M8 10H11M3 12.500H6M8 12.500H11" stroke="#4a8ad8" stroke-width="1.200"/><path d="M8 10.500H11V13H8Z" fill="#58a868"/></svg><div class="t" style="left:116px;top:1px">文档</div></div>
<div class="tr" style="top:136px"><svg class="ex" style="left:79px" viewBox="0 0 6 9"><path d="M1 0.700L4.800 4.500L1 8.300" fill="none" stroke="#a4a4a4" stroke-width="1.700"/></svg><svg style="left:93px;top:1px" width="17" height="17" viewBox="0 0 17 17"><path d="M5.500 0.500H11.500V8H16.500L8.500 16.500L0.500 8H5.500Z" fill="#2f8be0"/></svg><div class="t" style="left:116px;top:1px">下载</div></div>
<div class="tr" style="top:155px;background:#d9d9d9"><svg style="left:95px;top:1px" width="14" height="18" viewBox="0 0 14 18"><path d="M6.200 1V14" stroke="#2196e8" stroke-width="2"/><path d="M6.500 1Q7.500 5 12 8Q13.500 10.500 11 13.500Q12 9.500 6.500 6.500Z" fill="#2196e8"/><ellipse cx="4.200" cy="14" rx="3.600" ry="2.800" fill="#2196e8"/></svg><div class="t" style="left:116px;top:1px">音乐</div></div>
<div class="tr" style="top:174px"><svg class="ex" style="left:79px" viewBox="0 0 6 9"><path d="M1 0.700L4.800 4.500L1 8.300" fill="none" stroke="#a4a4a4" stroke-width="1.700"/></svg><svg style="left:93px;top:4px" width="17" height="12" viewBox="0 0 17 12"><rect x="0" y="0" width="17" height="12" rx="0.500" fill="#1e96f0"/><rect x="0" y="9.800" width="17" height="2.200" fill="#0a5aa8"/><path d="M2 11H3M14 11H15.500" stroke="#fff" stroke-width=".8"/></svg><div class="t" style="left:116px;top:1px">桌面</div></div>
<div class="tr" style="top:193px"><svg class="ex" style="left:61px" viewBox="0 0 6 9"><path d="M1 0.700L4.800 4.500L1 8.300" fill="none" stroke="#a4a4a4" stroke-width="1.700"/></svg><svg style="left:78px;top:3px" width="13" height="15" viewBox="0 0 13 15"><rect x="0" y="0" width="13" height="15" rx=".6" fill="#ffe48c"/><rect x="10.800" y="7" width="2.200" height="8" fill="#f4cd68"/><rect x="0" y="0" width="13" height="15" rx=".6" fill="none" stroke="#f8d980" stroke-width=".8"/></svg><div class="t" style="left:98px;top:1px"><span class="l" style="letter-spacing:0.50px">32R</span>缂栬緫閮╘<span class="l" style="letter-spacing:0.50px">AppData</span></div></div>
<div class="tr" style="top:212px"><svg class="ex" style="left:61px" viewBox="0 0 6 9"><path d="M1 0.700L4.800 4.500L1 8.300" fill="none" stroke="#a4a4a4" stroke-width="1.700"/></svg><svg style="left:78px;top:3px" width="13" height="15" viewBox="0 0 13 15"><rect x="0" y="0" width="13" height="15" rx=".6" fill="#ffe48c"/><rect x="10.800" y="7" width="2.200" height="8" fill="#f4cd68"/><rect x="0" y="0" width="13" height="15" rx=".6" fill="none" stroke="#f8d980" stroke-width=".8"/></svg><div class="t" style="left:98px;top:1px"><span class="l" style="letter-spacing:0.53px">Default</span></div></div>
<div class="tr" style="top:231px"><svg class="ex" style="left:61px" viewBox="0 0 6 9"><path d="M1 0.700L4.800 4.500L1 8.300" fill="none" stroke="#a4a4a4" stroke-width="1.700"/></svg><svg style="left:78px;top:3px" width="13" height="15" viewBox="0 0 13 15"><rect x="0" y="0" width="13" height="15" rx=".6" fill="#ffe48c"/><rect x="10.800" y="7" width="2.200" height="8" fill="#f4cd68"/><rect x="0" y="0" width="13" height="15" rx=".6" fill="none" stroke="#f8d980" stroke-width=".8"/></svg><div class="t" style="left:98px;top:1px"><span class="l" style="letter-spacing:0.00px">sxxxn</span></div></div>
<div class="tr" style="top:250px"><svg class="ex" style="left:61px" viewBox="0 0 6 9"><path d="M1 0.700L4.800 4.500L1 8.300" fill="none" stroke="#a4a4a4" stroke-width="1.700"/></svg><svg style="left:78px;top:3px" width="13" height="15" viewBox="0 0 13 15"><rect x="0" y="0" width="13" height="15" rx=".6" fill="#ffe48c"/><rect x="10.800" y="7" width="2.200" height="8" fill="#f4cd68"/><rect x="0" y="0" width="13" height="15" rx=".6" fill="none" stroke="#f8d980" stroke-width=".8"/></svg><div class="t" style="left:98px;top:1px">公用</div></div>
<div class="tr" style="top:269px"><svg class="ex" style="left:25px" viewBox="0 0 6 9"><path d="M1 0.700L4.800 4.500L1 8.300" fill="none" stroke="#a4a4a4" stroke-width="1.700"/></svg><svg style="left:41px;top:9px" width="14" height="8" viewBox="0 0 14 8"><path d="M1.500 0.500H12.500L13.500 4H0.500Z" fill="#d8d8d8"/><rect x="0.500" y="3.500" width="13" height="4" rx="0.500" fill="#3a3a3a"/><rect x="10" y="5" width="2" height="1" fill="#6ae06a"/></svg><div class="t" style="left:61px;top:1px">新加卷 <span class="l" style="letter-spacing:0.39px">(D:)</span></div></div>
<div class="tr" style="top:288px"><svg class="ex" style="left:7px" viewBox="0 0 6 9"><path d="M1 0.700L4.800 4.500L1 8.300" fill="none" stroke="#a4a4a4" stroke-width="1.700"/></svg><svg style="left:21px;top:2px" width="17" height="15" viewBox="0 0 17 15"><path d="M0.500 0.500H6L7.500 2.500H16.500V14.500H0.500Z" fill="#f8c850"/><path d="M0.500 4H16.500V14.500H0.500Z" fill="#fbd66a"/><path d="M4 14.500V8H13V14.500H10.500V11H6.500V14.500Z" fill="#2a86d8"/></svg><div class="t" style="left:43px;top:1px">库</div></div>
<div class="tr" style="top:307px"><svg class="ex" style="left:7px" viewBox="0 0 6 9"><path d="M1 0.700L4.800 4.500L1 8.300" fill="none" stroke="#a4a4a4" stroke-width="1.700"/></svg><svg style="left:21px;top:1px" width="18" height="17" viewBox="0 0 18 17"><circle cx="12" cy="6" r="5.500" fill="#5ab0e8"/><path d="M9 2Q12 4 10 7T12 11" stroke="#c8e8f8" stroke-width="1.500" fill="none"/><rect x="0.500" y="7" width="11" height="7" fill="#2a8ae8" stroke="#dceefa" stroke-width="1"/><path d="M4 16.500H8M6 14V16.500" stroke="#3a9ae8" stroke-width="1.200"/></svg><div class="t" style="left:43px;top:1px">网络</div></div>
<div class="tr" style="top:326px"><svg style="left:23px;top:3px" width="13" height="15" viewBox="0 0 13 15"><rect x="0" y="0" width="13" height="15" rx=".6" fill="#ffe48c"/><rect x="10.800" y="7" width="2.200" height="8" fill="#f4cd68"/><rect x="0" y="0" width="13" height="15" rx=".6" fill="none" stroke="#f8d980" stroke-width=".8"/></svg><div class="t" style="left:43px;top:1px"><span class="l" style="letter-spacing:0.52px">7-31</span></div></div>
<div class="tr" style="top:345px"><svg style="left:23px;top:3px" width="13" height="15" viewBox="0 0 13 15"><rect x="0" y="0" width="13" height="15" rx=".6" fill="#ffe48c"/><rect x="10.800" y="7" width="2.200" height="8" fill="#f4cd68"/><rect x="0" y="0" width="13" height="15" rx=".6" fill="none" stroke="#f8d980" stroke-width=".8"/></svg></div>
</div>
<!-- tree scrollbar -->
<div class="a" style="left:285px;top:384px;width:17px;height:349px;background:#f0f0f0"></div>
<svg style="left:289px;top:390px" width="8" height="6" viewBox="0 0 8 6"><path d="M0.800 5L4 1.600L7.200 5" stroke="#555" stroke-width="1.900" fill="none"/></svg>
<svg style="left:289px;top:720px" width="8" height="6" viewBox="0 0 8 6"><path d="M0.800 1L4 4.400L7.200 1" stroke="#555" stroke-width="1.900" fill="none"/></svg>
<div class="a" style="left:285px;top:590px;width:15px;height:91px;background:#cdcdcd"></div>
<!-- splitter -->
<div class="a" style="left:301px;top:360px;width:4px;height:373px;background:#f0f0f0"></div>
<!--/SECTION:TREE-->

<!--SECTION:LIST-->
<!-- ===== FILE LIST ===== -->
<div class="a" id="list" style="left:306px;top:361px;width:1120px;height:372px;background:#fff"></div>
<div class="a" style="left:305px;top:360px;width:1px;height:373px;background:#828282"></div>
<div class="a" style="left:305px;top:360px;width:1121px;height:1px;background:#828282"></div>
<div class="a" style="left:306px;top:382px;width:150px;height:351px;background:#f7f7f7"></div>
<!-- headers -->
<div class="hd" style="left:306px;width:150px"></div>
<div class="hd" style="left:456px;width:300px"></div>
<div class="hd" style="left:756px;width:150px"></div>
<div class="hd" style="left:906px;width:50px"></div>
<div class="hd" style="left:956px;width:70px"></div>
<div class="hd" style="left:1026px;width:50px"></div>
<div class="hd" style="left:1076px;width:70px"></div>
<div class="hd" style="left:1146px;width:50px"></div>
<div class="hd" style="left:1196px;width:30px"></div>
<div class="hd" style="left:1226px;width:68px"></div>
<div class="t" style="left:312px;top:362px">文件名称</div>
<svg style="left:367px;top:368px" width="9" height="6" viewBox="0 0 9 6"><path d="M0.500 5L4.500 1L8.500 5" stroke="#555" stroke-width="1" fill="none"/></svg>
<div class="t" style="left:462px;top:362px">艺术家</div>
<div class="t" style="left:762px;top:362px">标题</div>
<div class="t" style="left:925px;top:362px">年份</div>
<div class="t" style="left:962px;top:362px">流派</div>
<div class="t" style="left:1037px;top:362px">音轨...</div>
<div class="t" style="left:1104px;top:362px">比特率</div>
<div class="t" style="left:1166px;top:362px">时间</div>
<svg style="left:1202px;top:365px" width="12" height="12" viewBox="0 0 12 12"><rect x="0.500" y="0.500" width="11" height="11" fill="#f6f62a" stroke="#000" stroke-width="1"/><circle cx="8.300" cy="3.600" r="1.200" fill="#fff" stroke="#000" stroke-width=".8"/><path d="M1 11L4.500 6L7 9L8.500 7.500L11 10.500V11Z" fill="#888" stroke="#222" stroke-width=".7"/></svg>
<div class="t" style="left:1232px;top:362px">等级</div>
<!-- row 1 (selected) -->
<div class="a" style="left:306px;top:382px;width:988px;height:18px;background:#c3fbd8"></div>
<div class="a" style="left:328px;top:382px;width:122px;height:18px;background:#78cce9"></div>
<svg style="left:310px;top:383px" width="16" height="16" viewBox="0 0 16 16"><rect x="1" y="0" width="14" height="11" rx="1.500" fill="#2fc7a0"/><path d="M6 2.200L10.800 5.200L6 8.200Z" fill="none" stroke="#fff" stroke-width="1.200"/><rect x="0" y="8.500" width="16" height="7.500" rx="1" fill="#1a1a1a"/><text x="8" y="15" font-size="7" font-weight="bold" fill="#fff" text-anchor="middle" textLength="14" lengthAdjust="spacingAndGlyphs" font-family="Liberation Sans,sans-serif">MP3</text></svg>
<div class="t" style="left:332px;top:383px;word-spacing:1.1px">兰亭序 - 王十三<span class="l" style="letter-spacing:0.95px">.mp3</span></div>
<div class="t" style="left:464px;top:383px">王十三</div>
<div class="t" style="left:764px;top:383px">兰亭序</div>
<div class="t" style="left:1121px;top:383px"><span class="l">128</span></div>
<div class="t" style="left:1161px;top:383px"><span class="l">00:50</span></div>
<svg style="left:1204px;top:385px" width="16" height="14" viewBox="0 0 16 14"><rect x="0.500" y="0.500" width="11" height="11" fill="#f6f62a" stroke="#000" stroke-width="1"/><circle cx="8.300" cy="3.600" r="1.200" fill="#fff" stroke="#000" stroke-width=".8"/><path d="M1 11L4.500 6L7 9L8.500 7.500L11 10.500V11Z" fill="#888" stroke="#222" stroke-width=".7"/><path d="M1.500 7.500L4.500 6L7 8.500L15.500 2.500L8.500 13.500L5.500 12.500Z" fill="#1010e8" stroke="#1010e8" stroke-width=".6" stroke-linejoin="round"/></svg>
<svg style="left:1230px;top:386px" width="60" height="8" viewBox="0 0 60 8"><g fill="#c2c2c2" stroke="#5a5a5a" stroke-width="1"><circle cx="4" cy="4" r="2.700"/><circle cx="17" cy="4" r="2.700"/><circle cx="30" cy="4" r="2.700"/><circle cx="43" cy="4" r="2.700"/><circle cx="56" cy="4" r="2.700"/></g></svg>
<!-- row 2 -->
<svg style="left:310px;top:401px" width="16" height="16" viewBox="0 0 16 16"><rect x="1" y="0" width="14" height="11" rx="1.500" fill="#2fc7a0"/><path d="M6 2.200L10.800 5.200L6 8.200Z" fill="none" stroke="#fff" stroke-width="1.200"/><rect x="0" y="8.500" width="16" height="7.500" rx="1" fill="#1a1a1a"/><text x="8" y="15" font-size="7" font-weight="bold" fill="#fff" text-anchor="middle" textLength="14" lengthAdjust="spacingAndGlyphs" font-family="Liberation Sans,sans-serif">MP3</text></svg>
<div class="t" style="left:332px;top:401px;word-spacing:1.1px">兰亭序 - 周杰伦<span class="l" style="letter-spacing:0.95px">.mp3</span></div>
<div class="t" style="left:464px;top:401px">周杰伦</div>
<div class="t" style="left:764px;top:401px">兰亭序</div>
<div class="t" style="left:1121px;top:401px"><span class="l">128</span></div>
<div class="t" style="left:1161px;top:401px"><span class="l">04:14</span></div>
<svg style="left:1204px;top:403px" width="16" height="14" viewBox="0 0 16 14"><rect x="0.500" y="0.500" width="11" height="11" fill="#f6f62a" stroke="#000" stroke-width="1"/><circle cx="8.300" cy="3.600" r="1.200" fill="#fff" stroke="#000" stroke-width=".8"/><path d="M1 11L4.500 6L7 9L8.500 7.500L11 10.500V11Z" fill="#888" stroke="#222" stroke-width=".7"/><path d="M1.500 7.500L4.500 6L7 8.500L15.500 2.500L8.500 13.500L5.500 12.500Z" fill="#1010e8" stroke="#1010e8" stroke-width=".6" stroke-linejoin="round"/></svg>
<svg style="left:1230px;top:404px" width="60" height="8" viewBox="0 0 60 8"><g fill="#c2c2c2" stroke="#5a5a5a" stroke-width="1"><circle cx="4" cy="4" r="2.700"/><circle cx="17" cy="4" r="2.700"/><circle cx="30" cy="4" r="2.700"/><circle cx="43" cy="4" r="2.700"/><circle cx="56" cy="4" r="2.700"/></g></svg>
<!--/SECTION:LIST-->

<!--SECTION:STATUS-->
<!-- ===== STATUS BAR ===== -->
<div class="a" id="status" style="left:1px;top:733px;width:1425px;height:19px;background:#f0f0f0;border-top:1px solid #d7d7d7"></div>
<div class="a" style="left:0;top:751px;width:1426px;height:1px;background:#4c4a48"></div>
<div class="a" style="left:160px;top:735px;width:1px;height:16px;background:#d7d7d7"></div>
<div class="a" style="left:335px;top:735px;width:1px;height:16px;background:#d7d7d7"></div>
<div class="a" style="left:511px;top:735px;width:1px;height:16px;background:#d7d7d7"></div>
<div class="a" style="left:707px;top:735px;width:1px;height:16px;background:#d7d7d7"></div>
<div class="a" style="left:1290px;top:735px;width:1px;height:16px;background:#d7d7d7"></div>
<div class="a" style="left:1390px;top:735px;width:1px;height:16px;background:#d7d7d7"></div>
<div class="t" style="left:3px;top:734px">文件合计：<span class="l">2</span></div>
<div class="t" style="left:165px;top:734px">已选定文件：<span class="l">1</span></div>
<div class="t" style="left:340px;top:734px">时间合计：<span class="l">05:04</span></div>
<div class="t" style="left:517px;top:734px">所选时间：<span class="l">00:50</span></div>
<div class="t" style="left:1295px;top:734px"><span class="l">849 KB</span></div>
<div class="a" style="left:1401px;top:735px;width:15px;height:15px;border-radius:50%;background:radial-gradient(circle at 35% 30%,#7af07a 0,#18c018 45%,#0a8a0a 100%)"></div>
<svg style="left:1413px;top:739px" width="11" height="11" viewBox="0 0 11 11"><g fill="#bdbdbd"><rect x="8" y="0" width="2" height="2"/><rect x="4" y="4" width="2" height="2"/><rect x="8" y="4" width="2" height="2"/><rect x="0" y="8" width="2" height="2"/><rect x="4" y="8" width="2" height="2"/><rect x="8" y="8" width="2" height="2"/></g></svg>
<!--/SECTION:STATUS-->

<!--SECTION:MENUS-->
<!-- ===== OPTIONS DROPDOWN MENU ===== -->
<div class="a" id="menu1" style="left:307px;top:56px;width:198px;height:97px;background:#f2f2f2;border:1px solid #cccccc;box-shadow:3px 3px 4px rgba(0,0,0,.5)">
<div class="mi" style="top:71px;left:2px;width:192px;background:#91c9f7"></div>
<svg style="left:6px;top:6px" width="16" height="15" viewBox="0 0 16 15"><path d="M6.5 0.7L8.0 0.6L9.1 2.4L10.1 2.6L12.2 1.7L13.3 2.5L12.7 4.5L13.2 5.3L15.4 5.9L15.6 7.2L13.5 8.2L13.2 9.1L14.3 10.9L13.3 11.9L11.1 11.3L10.1 11.8L9.5 13.7L8.0 13.8L6.9 12.0L5.9 11.8L3.8 12.7L2.7 11.9L3.3 9.9L2.8 9.1L0.6 8.5L0.4 7.2L2.5 6.2L2.8 5.3L1.7 3.5L2.7 2.5L4.9 3.1L5.9 2.6Z" fill="#e6e23a" stroke="#000" stroke-width="1.5" stroke-linejoin="round"/><path d="M4.600 7.500A3.400 3.200 0 0 0 11.400 7.500Z" fill="#000"/><circle cx="8" cy="7.200" r="3.300" fill="none" stroke="#000" stroke-width=".9"/><rect x="6.600" y="0.800" width="2.800" height="6.600" rx=".8" fill="#d4d4d4" stroke="#333" stroke-width=".8"/><path d="M7.600 1.500V6.500" stroke="#fff" stroke-width=".8"/></svg>
<div class="t" style="left:35px;top:5px">选项</div>
<div class="t" style="left:113px;top:5px"><span class="l" style="letter-spacing:0.75px">Ctrl+Alt+O</span></div>
<div class="t" style="left:35px;top:28px">流派列表编辑器</div>
<div class="t" style="left:35px;top:51px">自定义工具栏和快捷方式</div>
<div class="t" style="left:35px;top:74px">语言（<span class="l" style="letter-spacing:0.67px">Language</span>）</div>
<svg style="left:184px;top:79px" width="4" height="7" viewBox="0 0 4 7"><path d="M0 0L4 3.500L0 7Z" fill="#000"/></svg>
</div>
<!-- ===== LANGUAGE SUBMENU ===== -->
<div class="a" id="menu2" style="left:499px;top:125px;width:213px;height:350px;background:#f2f2f2;border:1px solid #cccccc;box-shadow:3px 3px 4px rgba(0,0,0,.5)">
<div class="a" style="left:2px;top:2px;width:23px;height:23px;background:#91c9f7"></div>
<svg style="left:9px;top:9px" width="10" height="8" viewBox="0 0 10 8"><path d="M0.700 4L3.500 6.800L9.300 0.800" stroke="#1c3858" stroke-width="1.400" fill="none"/></svg>
<div class="t" style="left:35px;top:5px"><span class="l" style="letter-spacing:-0.08px">Chinese (PRC)</span></div>
<div class="t" style="left:35px;top:28px"><span class="l" style="letter-spacing:-0.00px">Czech</span></div>
<div class="t" style="left:35px;top:51px"><span class="l" style="letter-spacing:0.41px">Dutch</span></div>
<div class="t" style="left:35px;top:74px"><span class="l" style="letter-spacing:0.27px">English</span></div>
<div class="t" style="left:35px;top:97px"><span class="l" style="letter-spacing:0.21px">Estonian (Eesti)</span></div>
<div class="t" style="left:35px;top:120px"><span class="l" style="letter-spacing:0.13px">French (France)</span></div>
<div class="t" style="left:35px;top:143px"><span class="l" style="letter-spacing:0.40px">German (Germany)</span></div>
<div class="t" style="left:35px;top:166px"><span class="l" style="letter-spacing:0.59px">Hungarian</span></div>
<div class="t" style="left:35px;top:189px"><span class="l" style="letter-spacing:0.59px">Indonesian</span></div>
<div class="t" style="left:35px;top:212px"><span class="l" style="letter-spacing:0.40px">Italian (Italy)</span></div>
<div class="t" style="left:35px;top:235px"><span class="l" style="letter-spacing:0.68px">Korean</span></div>
<div class="t" style="left:35px;top:258px"><span class="l" style="letter-spacing:0.26px">Polish</span></div>
<div class="t" style="left:35px;top:281px"><span class="l" style="letter-spacing:0.40px">Portuguese (Brazil)</span></div>
<div class="t" style="left:35px;top:304px"><span class="l" style="letter-spacing:0.06px">Russian</span></div>
<div class="t" style="left:35px;top:327px"><span class="l" style="letter-spacing:0.44px">Spanish (Traditional Sort)</span></div>
</div>
<!--/SECTION:MENUS-->

<!-- window border -->
<div class="a" style="left:0;top:31px;width:1px;height:721px;background:#4c4a48"></div>
<div class="a" style="left:1425px;top:31px;width:1px;height:721px;background:#4c4a48"></div>
</body>
</html>
